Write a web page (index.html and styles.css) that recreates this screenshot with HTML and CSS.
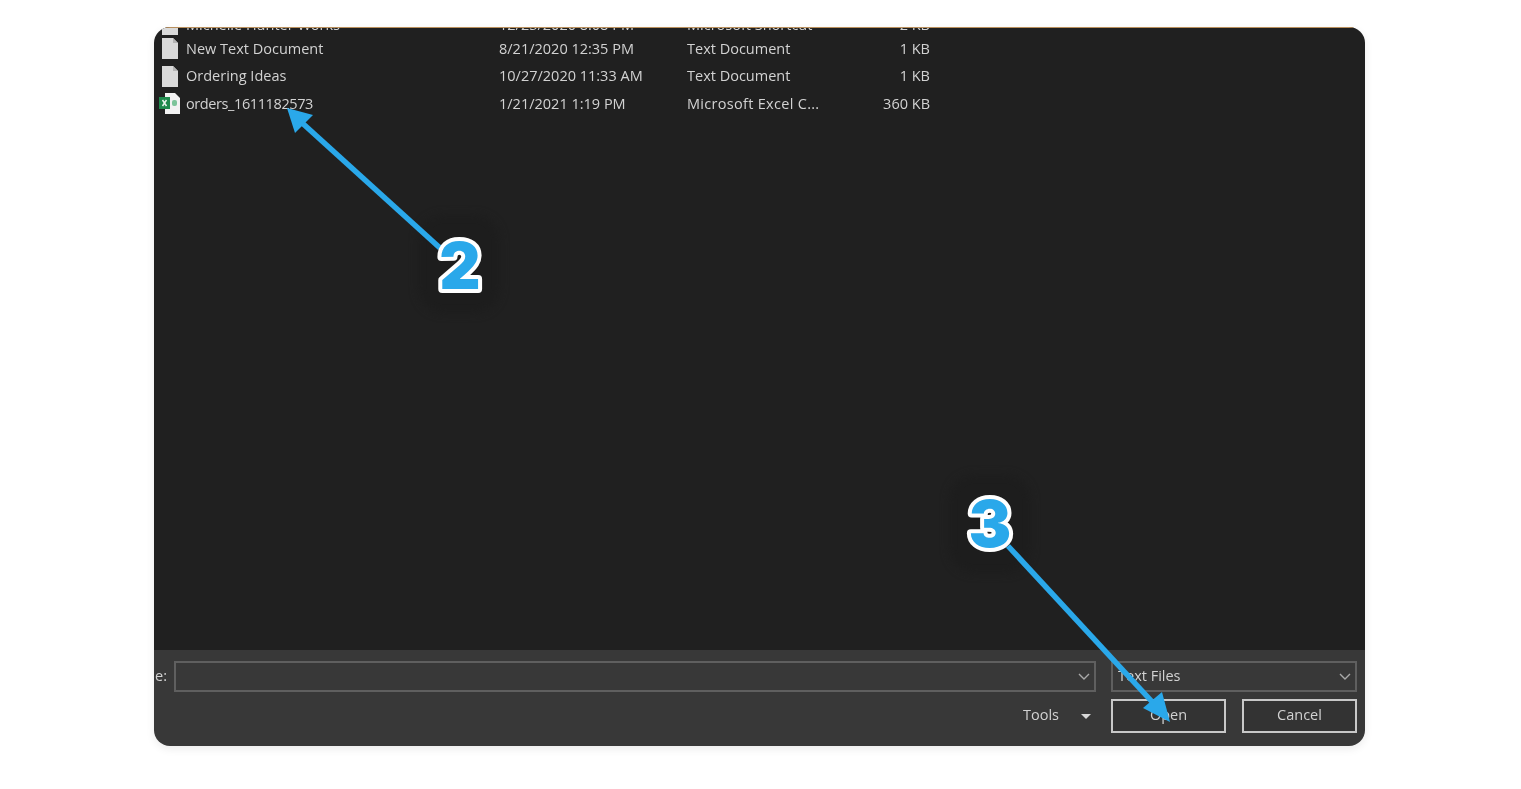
FILE: index.html
```html
<!DOCTYPE html>
<html lang="en">
<head>
    <meta charset="UTF-8">
    <meta name="viewport" content="width=device-width, initial-scale=1.0">
    <title>Open file</title>
    <link rel="stylesheet" href="styles.css">
</head>
<body>
    <div class="dialog">
        <div class="file-list">
            <div class="rows">
                <div class="row row-clipped">
                    <svg class="icon" viewBox="0 0 20 22"><path class="sheet" d="M2 1h11l5 5v16H2z"/></svg>
                    <span>Michelle Hunter Works</span>
                    <span>12/23/2020 8:08 PM</span>
                    <span>Microsoft Shortcut</span>
                    <span class="size">2 KB</span>
                </div>
                <div class="row">
                    <svg class="icon" viewBox="0 0 20 22"><path class="sheet" d="M2 1h11l5 5v16H2z"/><path class="fold" d="M13 1v5h5z"/></svg>
                    <span>New Text Document</span>
                    <span>8/21/2020 12:35 PM</span>
                    <span>Text Document</span>
                    <span class="size">1 KB</span>
                </div>
                <div class="row">
                    <svg class="icon" viewBox="0 0 20 22"><path class="sheet" d="M2 1h11l5 5v16H2z"/><path class="fold" d="M13 1v5h5z"/></svg>
                    <span>Ordering Ideas</span>
                    <span>10/27/2020 11:33 AM</span>
                    <span>Text Document</span>
                    <span class="size">1 KB</span>
                </div>
                <div class="row">
                    <svg class="icon icon-excel" viewBox="0 0 20 22">
                        <path fill="#f2f2f2" d="M5 1h10l5 5v16H5z"/>
                        <rect fill="#1e8a4c" x="-1" y="5" width="11" height="12"/>
                        <path stroke="#e8f5ec" stroke-width="1.5" fill="none" d="M2.5 8l4 6M6.5 8l-4 6"/>
                        <rect fill="#7cc49a" x="12" y="8" width="5" height="6" rx="2"/>
                    </svg>
                    <span class="digits">orders_1611182573</span>
                    <span>1/21/2021 1:19 PM</span>
                    <span class="wide">Microsoft Excel C...</span>
                    <span class="size">360 KB</span>
                </div>
            </div>
        </div>
        <div class="footer">
            <div class="footer-row">
                <div class="name-label"><span>File name:</span></div>
                <div class="select name-box">
                    <svg class="chevron" viewBox="0 0 12 7"><path d="M1 1l5 5 5-5"/></svg>
                </div>
                <div class="select type-box">
                    <span>Text Files</span>
                    <svg class="chevron" viewBox="0 0 12 7"><path d="M1 1l5 5 5-5"/></svg>
                </div>
            </div>
            <div class="footer-row actions">
                <span class="tools">Tools</span>
                <svg class="caret" viewBox="0 0 10 5"><path d="M0 0h10L5 5z"/></svg>
                <button class="btn">Open</button>
                <button class="btn">Cancel</button>
            </div>
        </div>
    </div>

    <div class="halo halo-two"></div>
    <div class="halo halo-three"></div>
    <svg class="arrows" viewBox="0 0 1521 789">
        <path class="shaft" d="M440 248L300 121"/>
        <path class="head" d="M287 108L313 115L295 133z"/>
        <path class="shaft" d="M1008 546L1156 706"/>
        <path class="head" d="M1170 722L1162 692L1143 708z"/>
        <text class="step" x="460" y="289">2</text>
        <text class="step" x="990" y="547">3</text>
    </svg>
</body>
</html>
```

FILE: styles.css
```css
body {
    margin: 0;
    height: 789px;
    overflow: hidden;
    background: #fff;
    font-family: "Open Sans", "Noto Sans", sans-serif;
    font-size: 14.5px;
    color: #d2d2d2;
}

.dialog {
    display: flex;
    flex-direction: column;
    width: 1211px;
    height: 719px;
    margin: 27px 0 0 154px;
    border-radius: 16px;
    overflow: hidden;
    box-shadow: 0 3px 8px rgba(0, 0, 0, 0.08);
}

.file-list {
    flex: 1;
    overflow: hidden;
    background: #202020;
    border-top: 1px solid #b98f5c;
}

.rows {
    margin-top: -15px;
    filter: blur(0.4px);
}

.row {
    display: grid;
    grid-template-columns: 26px 313px 188px 160px 83px;
    align-items: center;
    height: 27.5px;
    padding-left: 6px;
}

.row-clipped {
    height: 21.5px;
}

.row span {
    white-space: nowrap;
}

.digits {
    letter-spacing: -0.4px;
}

.wide {
    letter-spacing: 0.3px;
}

.size {
    text-align: right;
}

.icon {
    width: 20px;
    height: 22px;
}

.icon-excel {
    overflow: visible;
}

.sheet {
    fill: #d9d9d9;
}

.fold {
    fill: #b4b4b4;
}

.footer {
    display: flex;
    flex-direction: column;
    gap: 7px;
    height: 96px;
    box-sizing: border-box;
    padding: 11px 8px 0 0;
    background: #383838;
}

.footer-row {
    display: flex;
    align-items: center;
    filter: blur(0.4px);
}

.name-label {
    display: flex;
    justify-content: flex-end;
    width: 13px;
    margin-right: 7px;
    padding-bottom: 2px;
    overflow: hidden;
    white-space: nowrap;
}

.select {
    display: flex;
    align-items: center;
    justify-content: space-between;
    box-sizing: border-box;
    height: 31px;
    border: 2px solid #5f5f5f;
    padding: 0 4px 2px 5px;
}

.name-box {
    width: 922px;
    justify-content: flex-end;
    margin-right: 15px;
}

.type-box {
    width: 246px;
}

.chevron {
    width: 12px;
    height: 7px;
    margin-top: 2px;
    fill: none;
    stroke: #a9a9a9;
    stroke-width: 1.4;
}

.actions {
    justify-content: flex-end;
}

.tools {
    margin-right: 22px;
    padding-bottom: 3px;
}

.caret {
    width: 10px;
    height: 5px;
    margin-right: 20px;
    fill: #d8d8d8;
}

.btn {
    box-sizing: border-box;
    width: 115px;
    height: 34px;
    margin-left: 16px;
    padding: 0 0 3px;
    background: #333;
    border: 2px solid #c8c8c8;
    color: #d2d2d2;
    font: inherit;
}

.caret + .btn {
    margin-left: 0;
}

.halo {
    position: absolute;
    width: 82px;
    height: 98px;
    border-radius: 26px;
    background: #1d1d1d;
    filter: blur(4px);
}

.halo-two {
    left: 418px;
    top: 215px;
}

.halo-three {
    left: 949px;
    top: 475px;
}

.arrows {
    position: absolute;
    left: 0;
    top: 0;
    width: 1521px;
    height: 789px;
}

.shaft {
    stroke: #2aa8ea;
    stroke-width: 5.5;
    fill: none;
}

.head {
    fill: #2aa8ea;
}

.step {
    font-family: Inter, "Open Sans", sans-serif;
    font-size: 64px;
    font-weight: 900;
    text-anchor: middle;
    fill: #2aa8ea;
    stroke: #fff;
    stroke-width: 8;
    stroke-linejoin: round;
    paint-order: stroke fill;
}
```
